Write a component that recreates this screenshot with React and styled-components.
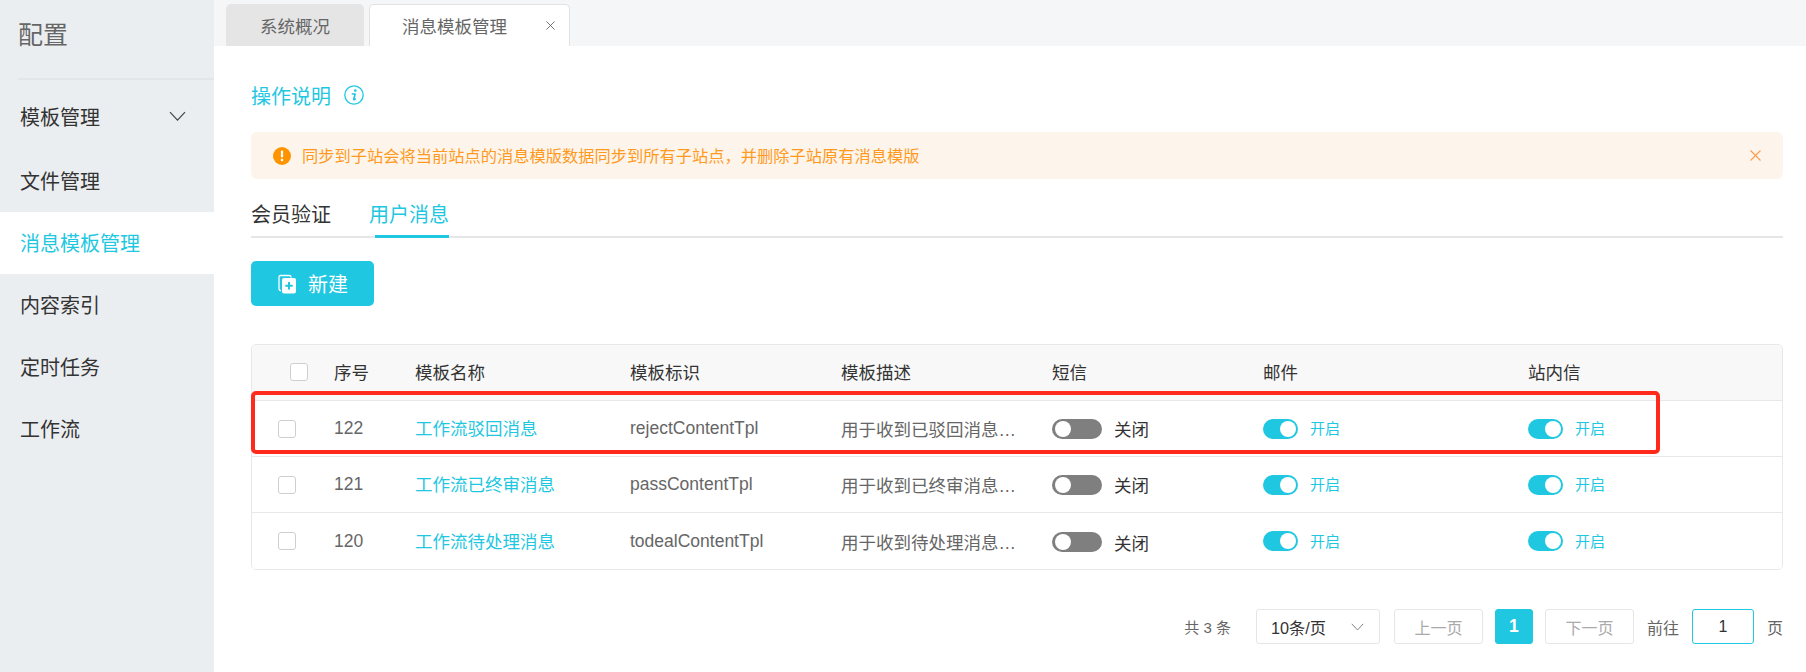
import React from 'react';
import styled, { createGlobalStyle } from 'styled-components';

const CYAN = '#1fc7e1';

const GlobalStyle = createGlobalStyle`
  html, body {
    margin: 0;
    padding: 0;
    background: #fff;
  }
  body {
    font-family: "Liberation Sans", "Noto Sans CJK SC", sans-serif;
    color: #333;
  }
  * {
    box-sizing: border-box;
  }
`;

const Page = styled.div`
  display: flex;
  width: 1806px;
  height: 672px;
  overflow: hidden;
`;

const Sidebar = styled.aside`
  width: 214px;
  flex: none;
  background: #ebeef1;
`;

const SideTitle = styled.div`
  height: 80px;
  margin-left: 18px;
  border-bottom: 2px solid #e3e6e9;
  font-size: 25px;
  line-height: 70px;
  color: #666;
`;

const SideMenu = styled.nav`
  padding-top: 6px;
`;

const SideItem = styled.div`
  display: flex;
  align-items: center;
  justify-content: space-between;
  height: 62px;
  padding: 0 28px 2px 20px;
  font-size: 20px;
  color: ${p => (p.$active ? CYAN : '#333')};
  background: ${p => (p.$active ? '#fff' : 'transparent')};

  &:first-child {
    height: 64px;
    padding-bottom: 4px;
  }
`;

const Main = styled.main`
  flex: 1;
  min-width: 0;
  display: flex;
  flex-direction: column;
  background: #f5f6f7;
`;

const TabBar = styled.div`
  display: flex;
  align-items: flex-end;
  gap: 5px;
  height: 46px;
  padding-left: 12px;
`;

const PageTab = styled.div`
  display: flex;
  align-items: center;
  height: 42px;
  font-size: 17.5px;
  color: #666;
  border-radius: 5px 5px 0 0;
  border: 1px solid ${p => (p.$active ? '#e2e2e2' : '#e5e5e5')};
  border-bottom: 0;
  background: ${p => (p.$active ? '#fff' : '#e5e5e5')};
  width: ${p => (p.$active ? '201px' : '138px')};
  padding-left: ${p => (p.$active ? '32px' : '33px')};
  gap: 39px;
`;

const Content = styled.div`
  flex: 1;
  background: #fff;
  padding: 0 23px 0 37px;
`;

const HelpLink = styled.div`
  display: flex;
  align-items: center;
  gap: 13px;
  height: 86px;
  padding-top: 12px;
  font-size: 20px;
  color: ${CYAN};
`;

const Alert = styled.div`
  display: flex;
  align-items: center;
  height: 47px;
  padding: 0 22px;
  border-radius: 6px;
  background: #fdf5ec;
  font-size: 16.25px;
  color: #ff9a1e;
`;

const AlertText = styled.span`
  flex: 1;
  margin-left: 11px;
  padding-bottom: 2px;
`;

const SubTabs = styled.div`
  display: flex;
  gap: 38px;
  height: 59px;
  border-bottom: 2px solid #e6e6e6;
  align-items: flex-end;
`;

const SubTab = styled.div`
  position: relative;
  height: 41px;
  font-size: 20px;
  line-height: 41px;
  color: ${p => (p.$active ? CYAN : '#333')};

  &::after {
    content: '';
    display: ${p => (p.$active ? 'block' : 'none')};
    position: absolute;
    left: 6px;
    right: 0;
    bottom: -2px;
    height: 3px;
    background: ${CYAN};
  }
`;

const AddButton = styled.button`
  display: flex;
  align-items: center;
  gap: 12px;
  width: 123px;
  height: 45px;
  margin-top: 23px;
  padding: 0 0 0 27px;
  border: 0;
  border-radius: 5px;
  background: ${CYAN};
  color: #fff;
  font-family: inherit;
  font-size: 20px;
`;

const TableWrap = styled.div`
  position: relative;
  margin-top: 38px;
`;

const Table = styled.div`
  border: 1px solid #e8e8e8;
  border-radius: 5px;
  overflow: hidden;
`;

const Row = styled.div`
  display: grid;
  grid-template-columns: 82px 81px 215px 211px 211px 211px 265px 1fr;
  align-items: center;
  height: 56px;
  padding-bottom: ${p => (p.$head ? '2px' : '0')};
  background: ${p => (p.$head ? '#f8f8f8' : '#fff')};
  border-bottom: 1px solid #e8e8e8;
  font-size: 17.5px;
  color: ${p => (p.$head ? '#333' : '#666')};

  &:last-child {
    border-bottom: 0;
  }
`;

const CheckCell = styled.div`
  padding-left: ${p => (p.$head ? '38px' : '26px')};
`;

const CheckBox = styled.span`
  display: block;
  width: 18px;
  height: 18px;
  background: #fff;
  border: 1px solid #cfcfcf;
  border-radius: 3px;
`;

const NameLink = styled.span`
  padding-bottom: 2px;
  color: ${CYAN};
`;

const SwitchCell = styled.div`
  display: flex;
  align-items: center;
  gap: 12px;
  margin-top: ${p => (p.$drop ? '2px' : '0')};
`;

const Track = styled.span`
  position: relative;
  display: block;
  width: ${p => (p.$on ? '35px' : '50px')};
  height: 20px;
  border-radius: 10px;
  background: ${p => (p.$on ? CYAN : '#7f7f7f')};

  &::after {
    content: '';
    position: absolute;
    top: 2px;
    left: ${p => (p.$on ? '17px' : '3px')};
    width: 16px;
    height: 16px;
    border-radius: 50%;
    background: #fff;
  }
`;

const SwitchLabel = styled.span`
  padding-bottom: ${p => (p.$on ? '2px' : '0')};
  font-size: ${p => (p.$on ? '15px' : '17.5px')};
  color: ${p => (p.$on ? CYAN : '#333')};
`;

const Marker = styled.div`
  position: absolute;
  top: 47px;
  left: 0;
  width: 1409px;
  height: 63px;
  border: 4px solid #ff2a1c;
  border-radius: 5px;
  pointer-events: none;
`;

const Pager = styled.div`
  display: flex;
  justify-content: flex-end;
  align-items: center;
  height: 35px;
  margin-top: 39px;
  font-size: 16px;
  color: #666;
`;

const Total = styled.span`
  font-size: 15px;
  margin-right: 25px;
`;

const PageSize = styled.div`
  display: flex;
  align-items: center;
  justify-content: space-between;
  width: 124px;
  height: 35px;
  padding: 0 15px 0 14px;
  margin-right: 14px;
  border: 1px solid #e6e6e6;
  border-radius: 3px;
  font-size: 16.25px;
  color: #333;
`;

const PageButton = styled.div`
  display: flex;
  align-items: center;
  justify-content: center;
  width: ${p => (p.$current ? '38px' : '89px')};
  height: 35px;
  margin-right: ${p => (p.$last ? '13px' : '12px')};
  border: 1px solid ${p => (p.$current ? CYAN : '#e6e6e6')};
  border-radius: 3px;
  background: ${p => (p.$current ? CYAN : '#fff')};
  color: ${p => (p.$current ? '#fff' : '#aaa')};
  font-size: ${p => (p.$current ? '17.5px' : '16px')};
  font-weight: ${p => (p.$current ? 700 : 400)};
`;

const JumpInput = styled.div`
  display: flex;
  align-items: center;
  justify-content: center;
  width: 62px;
  height: 35px;
  margin: 0 13px;
  border: 1px solid ${CYAN};
  border-radius: 3px;
  color: #333;
`;

const Chevron = ({ size = 17, color = '#444' }) => (
  <svg width={size} height={size * 0.6} viewBox="0 0 17 10" fill="none">
    <path d="M1 1l7.5 8L16 1" stroke={color} strokeWidth="1.2" />
  </svg>
);

const Cross = ({ size, color }) => (
  <svg width={size} height={size} viewBox="0 0 11 11" fill="none">
    <path d="M.5.5l10 10M10.5.5l-10 10" stroke={color} strokeWidth="1.1" />
  </svg>
);

const InfoIcon = () => (
  <svg width="20" height="20" viewBox="0 0 20 20" fill="none">
    <circle cx="10" cy="10" r="9.2" stroke={CYAN} strokeWidth="1.3" />
    <circle cx="11.3" cy="5.6" r="1.3" fill={CYAN} />
    <path d="M8.3 9h2.9l-1.5 5.2c-.1.5.4.6 1.6-.2" stroke={CYAN} strokeWidth="1.6" strokeLinecap="round" strokeLinejoin="round" />
  </svg>
);

const WarnIcon = () => (
  <svg width="18" height="18" viewBox="0 0 18 18">
    <circle cx="9" cy="9" r="9" fill="#ff9400" />
    <rect x="7.9" y="3.6" width="2.2" height="7" rx="1" fill="#fff" />
    <circle cx="9" cy="13" r="1.3" fill="#fff" />
  </svg>
);

const AddIcon = () => (
  <svg width="18" height="20" viewBox="0 0 18 20" fill="none">
    <path d="M3 16.5H2.5A1.5 1.5 0 0 1 1 15V3a1.5 1.5 0 0 1 1.5-1.5h9A1.5 1.5 0 0 1 13 3v.5" stroke="#fff" strokeWidth="1.3" />
    <rect x="4" y="4" width="14" height="15.5" rx="2" fill="#fff" />
    <path d="M11 8v7.500M7.300 11.700h7.400" stroke={CYAN} strokeWidth="2" />
  </svg>
);

const Switch = ({ on, drop }) => (
  <SwitchCell $drop={drop}>
    <Track $on={on} />
    <SwitchLabel $on={on}>{on ? '开启' : '关闭'}</SwitchLabel>
  </SwitchCell>
);

const templates = [
  { id: 122, name: '工作流驳回消息', key: 'rejectContentTpl', desc: '用于收到已驳回消息…' },
  { id: 121, name: '工作流已终审消息', key: 'passContentTpl', desc: '用于收到已终审消息…' },
  { id: 120, name: '工作流待处理消息', key: 'todealContentTpl', desc: '用于收到待处理消息…', drop: true },
];

const menu = ['模板管理', '文件管理', '消息模板管理', '内容索引', '定时任务', '工作流'];

const App = () => {
  return (
    <>
      <GlobalStyle />
      <Page>
        <Sidebar>
          <SideTitle>配置</SideTitle>
          <SideMenu>
            {menu.map((item, i) => (
              <SideItem key={item} $active={i === 2}>
                {item}
                {i === 0 && <Chevron />}
              </SideItem>
            ))}
          </SideMenu>
        </Sidebar>
        <Main>
          <TabBar>
            <PageTab>系统概况</PageTab>
            <PageTab $active>
              消息模板管理
              <Cross size={9} color="#666" />
            </PageTab>
          </TabBar>
          <Content>
            <HelpLink>
              操作说明
              <InfoIcon />
            </HelpLink>
            <Alert>
              <WarnIcon />
              <AlertText>同步到子站会将当前站点的消息模版数据同步到所有子站点，并删除子站原有消息模版</AlertText>
              <Cross size={11} color="#ff9a4a" />
            </Alert>
            <SubTabs>
              <SubTab>会员验证</SubTab>
              <SubTab $active>用户消息</SubTab>
            </SubTabs>
            <AddButton>
              <AddIcon />
              新建
            </AddButton>
            <TableWrap>
              <Table>
                <Row $head>
                  <CheckCell $head><CheckBox /></CheckCell>
                  <div>序号</div>
                  <div>模板名称</div>
                  <div>模板标识</div>
                  <div>模板描述</div>
                  <div>短信</div>
                  <div>邮件</div>
                  <div>站内信</div>
                </Row>
                {templates.map(t => (
                  <Row key={t.id}>
                    <CheckCell><CheckBox /></CheckCell>
                    <div>{t.id}</div>
                    <NameLink>{t.name}</NameLink>
                    <div>{t.key}</div>
                    <div>{t.desc}</div>
                    <Switch drop={t.drop} />
                    <Switch on />
                    <Switch on />
                  </Row>
                ))}
              </Table>
              <Marker />
            </TableWrap>
            <Pager>
              <Total>共 3 条</Total>
              <PageSize>
                10条/页
                <Chevron size={13} color="#777" />
              </PageSize>
              <PageButton>上一页</PageButton>
              <PageButton $current>1</PageButton>
              <PageButton $last>下一页</PageButton>
              前往
              <JumpInput>1</JumpInput>
              页
            </Pager>
          </Content>
        </Main>
      </Page>
    </>
  );
};

export default App;
